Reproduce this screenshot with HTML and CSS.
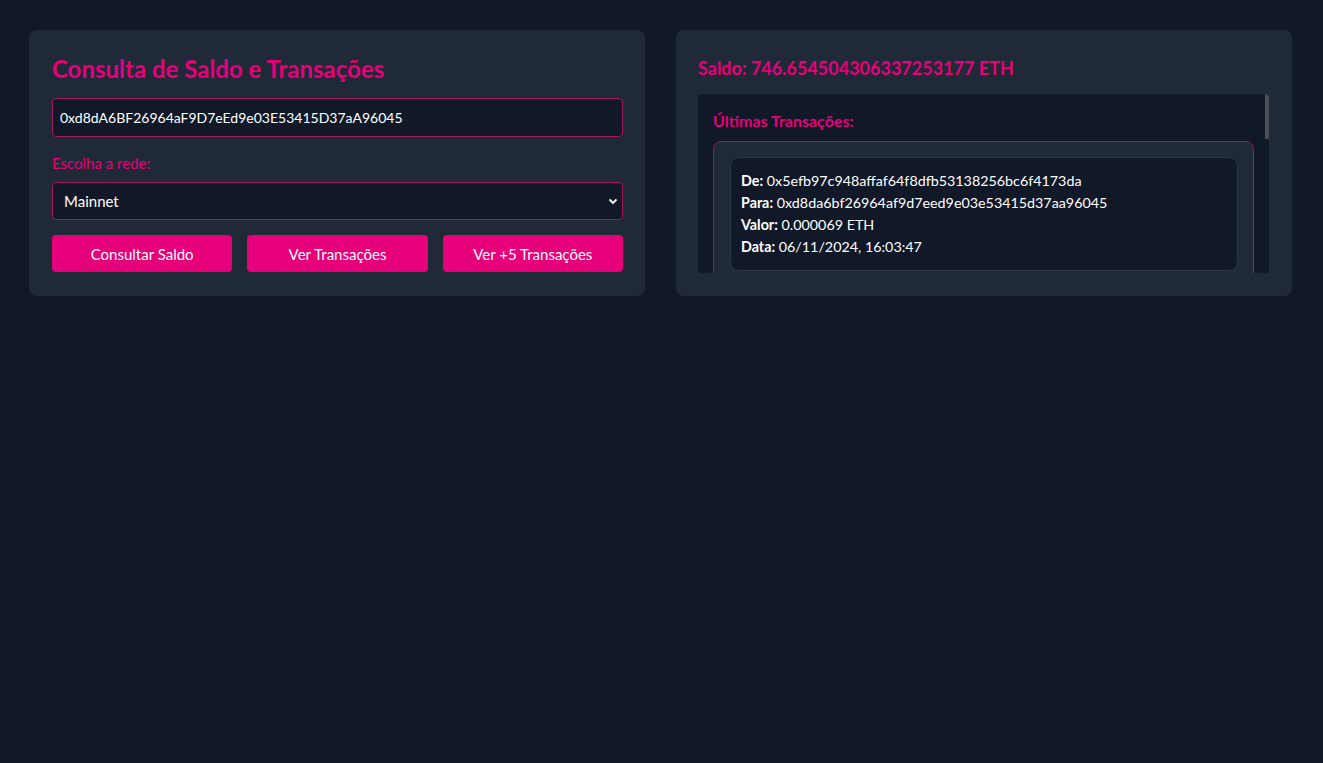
FILE: index.html
```html
<!DOCTYPE html>
<html lang="pt-BR">
<head>
<meta charset="utf-8">
<title>Consulta de Saldo e Transações</title>
<link rel="stylesheet" href="styles.css">
</head>
<body>
<main class="layout">
  <section class="card card-left">
    <h1 class="title">Consulta de Saldo e Transações</h1>
    <input class="field" type="text" value="0xd8dA6BF26964aF9D7eEd9e03E53415D37aA96045">
    <label class="label" for="net">Escolha a rede:</label>
    <div class="select-wrap">
      <select id="net" class="select">
        <option>Mainnet</option>
      </select>
      <svg class="chev" width="10" height="7" viewBox="0 0 10 7"><path d="M1.5 1.5 L5 5 L8.5 1.5" fill="none" stroke="#ffffff" stroke-width="1.8"/></svg>
    </div>
    <div class="actions">
      <button class="btn">Consultar Saldo</button>
      <button class="btn">Ver Transações</button>
      <button class="btn">Ver +5 Transações</button>
    </div>
  </section>
  <section class="card card-right">
    <h2 class="balance">Saldo: 746.654504306337253177 ETH</h2>
    <div class="scroll">
      <span class="thumb"></span>
      <h3 class="subtitle">Últimas Transações:</h3>
      <div class="tx-list">
        <div class="tx">
          <p><b>De:</b> 0x5efb97c948affaf64f8dfb53138256bc6f4173da</p>
          <p><b>Para:</b> 0xd8da6bf26964af9d7eed9e03e53415d37aa96045</p>
          <p><b>Valor:</b> 0.000069 ETH</p>
          <p><b>Data:</b> 06/11/2024, 16:03:47</p>
        </div>
      </div>
    </div>
  </section>
</main>
</body>
</html>
```
FILE: styles.css
```css
* { box-sizing: border-box; }
html, body {
  margin: 0;
  background: #111827;
  color: #ffffff;
  font-family: Lato, "Noto Sans", sans-serif;
}
.layout {
  display: flex;
  align-items: flex-start;
  gap: 31px;
  padding: 30px 31px 0 29px;
}
.card {
  flex: 1;
  background: #1f2937;
  border-radius: 8px;
  padding: 23px;
  display: flex;
  flex-direction: column;
}
.card-left {
  padding: 24px 22px 24px 23px;
}
.title {
  margin: 0 0 14px 0;
  font-size: 24px;
  line-height: 30px;
  font-weight: 700;
  color: #e6007a;
}
.field {
  height: 39px;
  border: 1px solid #a3155f;
  border-radius: 4px;
  background: #111827;
  color: #ffffff;
  font: inherit;
  font-size: 14px;
  padding: 0 7px;
  outline: none;
}
.label {
  margin-top: 16px;
  font-size: 15px;
  line-height: 20px;
  color: #e6007a;
}
.select-wrap {
  position: relative;
  margin-top: 9px;
}
.select {
  width: 100%;
  height: 38px;
  appearance: none;
  -webkit-appearance: none;
  border: 1px solid #a3155f;
  border-radius: 4px;
  background: #111827;
  color: #ffffff;
  font: inherit;
  font-size: 15px;
  padding: 0 11px;
}
.chev {
  position: absolute;
  right: 5px;
  top: 16px;
}
.actions {
  display: flex;
  gap: 15px;
  margin-top: 15px;
}
.btn {
  flex: 1;
  height: 37px;
  border: none;
  border-radius: 4px;
  background: #e6007a;
  color: #ffffff;
  font: inherit;
  font-size: 15px;
}
.card-right {
  padding: 26px 23px 23px 22px;
}
.balance {
  margin: 0 0 14px 0;
  font-size: 18px;
  line-height: 24px;
  font-weight: 700;
  color: #e6007a;
}
.scroll {
  position: relative;
  height: 179px;
  overflow: hidden;
  background: #111827;
  border-radius: 4px;
  padding: 15px 15px 15px 15px;
}
.thumb {
  position: absolute;
  top: 0;
  right: 0;
  width: 4px;
  height: 45px;
  background: #4a4f58;
}
.subtitle {
  margin: 1px 0 9px 0;
  font-size: 16px;
  line-height: 22px;
  font-weight: 700;
  color: #e6007a;
}
.tx-list {
  border: 1px solid #a3155f;
  border-radius: 8px;
  background: #1f2937;
  padding: 15px 15px 15px 16px;
  display: flex;
  flex-direction: column;
  gap: 12px;
}
.tx {
  background: #111827;
  border: 1px solid #2d3748;
  border-radius: 8px;
  padding: 12px 10px;
}
.tx p {
  margin: 0;
  font-size: 14.3px;
  line-height: 22px;
}
.tx b { font-weight: 700; }
```
